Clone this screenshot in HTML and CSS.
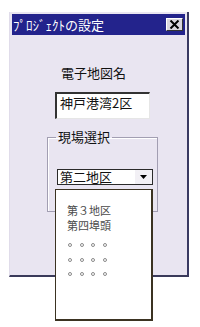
FILE: index.html
```html
<!DOCTYPE html>
<html lang="ja">
<head>
<meta charset="utf-8">
<link rel="stylesheet" href="styles.css">
</head>
<body>
<div class="stage">
  <div class="win">
    <div class="titlebar">
      <span class="title">ﾌﾟﾛｼﾞｪｸﾄの設定</span>
      <span class="close"><svg width="11" height="9" viewBox="0 0 11 9"><path d="M1.5 0.5 L9.5 8.5 M9.5 0.5 L1.5 8.5" stroke="#000" stroke-width="2" fill="none"/></svg></span>
    </div>
    <div class="label">電子地図名</div>
    <div class="input">神戸港湾2区</div>
    <fieldset class="group">
      <legend>現場選択</legend>
      <div class="combo">
        <span class="value">第二地区</span>
        <span class="btn"><svg width="7" height="4" viewBox="0 0 7 4"><path d="M0 0 H7 L3.5 4 Z" fill="#000"/></svg></span>
      </div>
    </fieldset>
  </div>
  <div class="list">
    <div class="item">第３地区</div>
    <div class="item">第四埠頭</div>
    <div class="dots">
      <i></i><i></i><i></i><i></i>
      <i></i><i></i><i></i><i></i>
      <i></i><i></i><i></i><i></i>
    </div>
  </div>
</div>
</body>
</html>
```
FILE: styles.css
```css
html, body {
  margin: 0;
  padding: 0;
  background: #ffffff;
  overflow: visible;
}
body {
  font-family: "Noto Sans CJK JP", "Noto Sans", sans-serif;
  color: #111;
}
.stage {
  position: relative;
  width: 200px;
  height: 327px;
  padding-top: 12px;
  box-sizing: border-box;
}
.win {
  box-sizing: border-box;
  margin-left: 9px;
  width: 180px;
  height: 265px;
  background: #e9e5f1;
  border-left: 1px solid #e0dcea;
  border-right: 2px solid #3a3a62;
  border-bottom: 2px solid #3a3a5a;
  padding: 2px 2px 0 2px;
}
.titlebar {
  height: 21px;
  background: #23238c;
  display: flex;
  align-items: center;
  justify-content: space-between;
  padding: 0 2px 0 1px;
}
.title {
  color: #fff;
  font-size: 13px;
  line-height: 16px;
  white-space: nowrap;
}
.close {
  box-sizing: border-box;
  width: 17px;
  height: 13px;
  background: #d9d6dd;
  border-top: 1px solid #fff;
  border-left: 1px solid #fff;
  border-right: 1px solid #333;
  border-bottom: 1px solid #333;
  display: flex;
  align-items: center;
  justify-content: center;
}
.label {
  margin: 30px 0 0 49px;
  font-size: 13px;
  line-height: 16px;
  color: #111;
}
.input {
  box-sizing: border-box;
  margin: 11px 0 0 43px;
  width: 95px;
  height: 27px;
  background: #fff;
  border-top: 2px solid #333;
  border-left: 2px solid #333;
  border-right: 1px solid #e6e6e6;
  border-bottom: 1px solid #e6e6e6;
  padding: 1px 0 0 3px;
  font-size: 13px;
  line-height: 16px;
  color: #111;
}
.group {
  box-sizing: border-box;
  margin: 10px 0 0 35px;
  width: 111px;
  padding: 0;
  border: 1px solid #a29eb2;
  box-shadow: inset 1px 1px 0 #fff;
  min-width: 0;
}
.group legend {
  margin-left: 8px;
  padding: 0 2px;
  font-size: 13px;
  line-height: 16px;
  color: #111;
}
.combo {
  box-sizing: border-box;
  margin: 24px 0 26px 9px;
  width: 96px;
  height: 16px;
  background: #fff;
  border: 1px solid #2a2a2a;
  display: flex;
  align-items: center;
  justify-content: space-between;
}
.value {
  padding-left: 2px;
  font-size: 13px;
  line-height: 14px;
  color: #111;
}
.btn {
  box-sizing: border-box;
  width: 17px;
  height: 14px;
  background: #f2f0f5;
  display: flex;
  align-items: center;
  justify-content: center;
}
.list {
  position: absolute;
  left: 55px;
  top: 189px;
  box-sizing: border-box;
  width: 98px;
  height: 132px;
  background: #fff;
  border: 1px solid #3b3322;
  border-right-width: 2px;
  border-bottom-width: 2px;
  padding: 13px 0 0 11px;
  z-index: 2;
}
.item {
  font-size: 11px;
  line-height: 15px;
  color: #4a4a4a;
}
.dots {
  margin: 10px 0 0 1px;
  display: grid;
  grid-template-columns: repeat(4, 4px);
  column-gap: 7.7px;
  row-gap: 10.5px;
}
.dots i {
  display: block;
  width: 4px;
  height: 4px;
  box-sizing: border-box;
  border: 1px solid #8a8a8a;
  border-radius: 50%;
}
```
